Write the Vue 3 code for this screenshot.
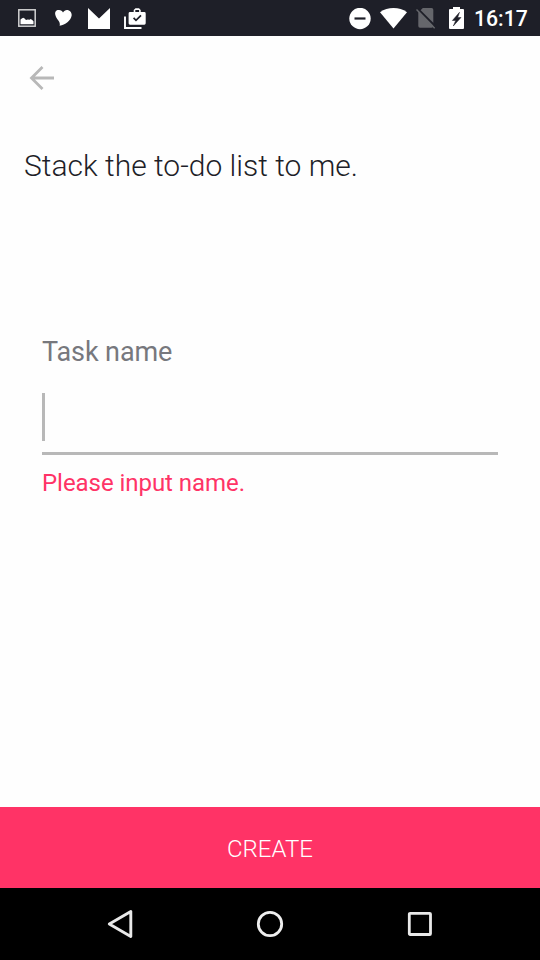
<script setup>
import { ref } from 'vue'

const time = ref('16:17')
const error = ref('Please input name.')
</script>

<template>
  <div class="screen">
    <header class="status">
      <div class="notices">
        <svg class="raised" width="20" height="20" viewBox="0 0 20 20">
          <rect x="1.8" y="1.8" width="16.4" height="16.4" fill="none" stroke="#d2d2d3" stroke-width="1.5" />
          <path d="M3.500 16.300V11.500L4.800 10.400L6.200 9.700L7.600 10.500L9 12L10.800 11.400L12.500 11.700L13.800 10.900L15.200 12L16.500 13.300V16.300z" fill="#fff" />
        </svg>
        <svg class="raised" width="18" height="18" viewBox="0 0 18 18">
          <path d="M4.600 16.800C5.400 13.800 3.900 12.300 2.200 10C.6 7.800-.2 5 .2 3.400C.8 1.200 2.400.8 4 .9C6 1 7.400 1.800 8 3.500C9 1.400 11.300.5 13.400 1.200C15.800 2 17 4.300 16.600 6.800C15.800 11.800 10.400 15.600 4.600 16.800z" fill="#fff" />
        </svg>
        <svg width="22" height="21" viewBox="0 0 22 21">
          <path d="M0 0L11 10.500L22 0V21H0z" fill="#fff" />
        </svg>
        <svg width="22" height="22" viewBox="0 0 22 22">
          <path d="M1 8.500V20H17.500" fill="none" stroke="#fff" stroke-width="1.900" />
          <path fill-rule="evenodd" d="M6 4H9.700V2L11.500.3H15L16.700 2V4H20.300Q21.700 4 21.700 5.400V15.300Q21.700 16.700 20.300 16.700H6Q4.600 16.700 4.600 15.300V5.400Q4.600 4 6 4zM11.300 4H15.100V2.100H11.300z" fill="#fff" />
          <path d="M9.600 9.900L12 12.400L17 7.400" fill="none" stroke="#1e1f28" stroke-width="1.700" />
        </svg>
      </div>
      <div class="system">
        <svg class="dnd" width="22" height="22" viewBox="0 0 22 22">
          <circle cx="11" cy="10.500" r="10.700" fill="#fff" />
          <path d="M5.500 10.500H16.500" stroke="#1e1f28" stroke-width="2.200" />
        </svg>
        <svg class="wifi" width="27" height="21" viewBox="0 0 27 21">
          <path d="M0 4.200Q6 0 13.500 0T27 4.200L13.500 20.500z" fill="#fff" />
        </svg>
        <svg class="sim" width="20" height="21" viewBox="0 0 20 21">
          <path d="M6.800 0H15.500Q17.300 0 17.300 1.800V18Q17.300 19.700 15.500 19.700H4Q2.300 19.700 2.300 18V4.500z" fill="#65666b" />
          <path d="M1.500 .5L20 19" stroke="#1e1f28" stroke-width="2" />
          <path d="M.5 1.500L18.700 20.300" stroke="#65666b" stroke-width="1.400" />
        </svg>
        <svg class="battery raised" width="15" height="22" viewBox="0 0 15 22">
          <path d="M4 0H11V2H14Q15 2 15 3V21Q15 22 14 22H1Q0 22 0 21V3Q0 2 1 2H4z" fill="#fff" />
          <path d="M10.500 5.300L3.400 13.500H6.700L4.300 19L12 10.500H8.700z" fill="#1e1f28" stroke="#1e1f28" stroke-width=".5" />
        </svg>
        <span class="clock">{{ time }}</span>
      </div>
    </header>

    <main class="content">
      <button class="back" aria-label="Back">
        <svg width="26" height="26" viewBox="0 0 26 26">
          <path d="M25 13H3M13.500 2L2.500 13L13.500 24" fill="none" stroke="#b8b8b8" stroke-width="2.800" />
        </svg>
      </button>
      <h1 class="title">Stack the to-do list to me.</h1>
      <section class="field">
        <label class="label">Task name</label>
        <div class="entry"><span class="caret"></span></div>
        <p class="error">{{ error }}</p>
      </section>
    </main>

    <button class="create">CREATE</button>

    <nav class="nav">
      <svg width="30" height="30" viewBox="0 0 30 30">
        <path d="M4.300 15L25.800 2.500V27.500z" fill="none" stroke="#e9e9e9" stroke-width="2.900" stroke-linejoin="round" />
      </svg>
      <svg width="30" height="30" viewBox="0 0 30 30">
        <circle cx="15" cy="15" r="11.700" fill="none" stroke="#efefef" stroke-width="2.800" />
      </svg>
      <svg width="30" height="30" viewBox="0 0 30 30">
        <rect x="4.300" y="4.300" width="21.200" height="21.200" rx=".8" fill="none" stroke="#e9e9e9" stroke-width="2.800" />
      </svg>
    </nav>
  </div>
</template>

<style>
body {
  margin: 0;
  background: #fff;
}
</style>

<style scoped>
.screen {
  display: flex;
  flex-direction: column;
  width: 540px;
  height: 960px;
  overflow: hidden;
  background: #fefefe;
  font-family: Roboto, "Liberation Sans", sans-serif;
}
svg {
  display: block;
  flex: none;
}
button {
  border: 0;
  padding: 0;
  background: none;
  font-family: inherit;
}
.status {
  display: flex;
  flex: none;
  justify-content: space-between;
  box-sizing: border-box;
  height: 36px;
  padding: 1px 13px 0 17px;
  background: #1e1f28;
}
.notices {
  display: flex;
  align-items: center;
}
.raised {
  margin-bottom: 1px;
}
.notices svg:nth-child(2) {
  margin-left: 18px;
}
.notices svg:nth-child(3) {
  margin-left: 15px;
}
.notices svg:nth-child(4) {
  margin-left: 14px;
}
.system {
  display: flex;
  align-items: center;
}
.wifi {
  margin-left: 9px;
}
.sim {
  margin-left: 9px;
}
.battery {
  margin-left: 13px;
}
.clock {
  width: 53px;
  margin-left: 10px;
  color: #fff;
  font-size: 21.2px;
  font-weight: 500;
  line-height: 36px;
  white-space: nowrap;
}
.content {
  flex: 1;
}
.back {
  display: block;
  margin: 29px 0 0 29px;
}
.title {
  margin: 55px 24px 0;
  color: #1e1f28;
  font-size: 30px;
  font-weight: 300;
  line-height: 40px;
  white-space: nowrap;
}
.field {
  display: flex;
  flex-direction: column;
  margin: 150px 42px 0;
}
.label {
  color: #77787d;
  font-size: 27px;
  line-height: 32px;
  letter-spacing: -0.1px;
}
.entry {
  height: 59px;
  margin-top: 25px;
  border-bottom: 3px solid #b8b8b8;
}
.caret {
  display: block;
  width: 3px;
  height: 48px;
  background: #b8b8b8;
}
.error {
  margin: 14px 0 0;
  color: #ff3366;
  font-size: 24px;
  line-height: 28px;
  letter-spacing: -0.05px;
}
.create {
  flex: none;
  height: 81px;
  padding: 4px 0 0 0;
  background: #ff3366;
  color: #fff;
  font-size: 24px;
  font-weight: 300;
  line-height: 77px;
}
.nav {
  display: flex;
  flex: none;
  align-items: center;
  justify-content: center;
  gap: 120px;
  height: 72px;
  background: #000;
}
</style>
